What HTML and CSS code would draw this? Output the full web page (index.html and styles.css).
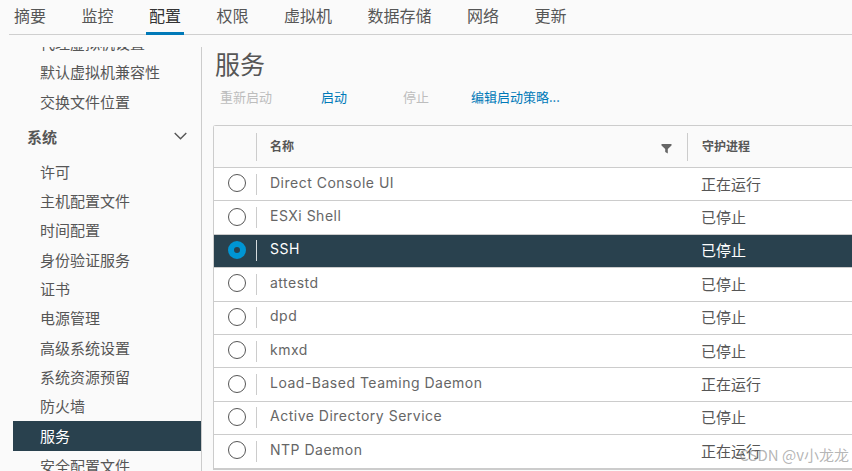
FILE: index.html
```html
<!DOCTYPE html>
<html lang="zh">
<head>
<meta charset="utf-8">
<title>服务</title>
<link rel="stylesheet" href="styles.css">
</head>
<body>
<nav class="tabs">
  <a class="tab">摘要</a>
  <a class="tab">监控</a>
  <a class="tab active">配置</a>
  <a class="tab">权限</a>
  <a class="tab">虚拟机</a>
  <a class="tab">数据存储</a>
  <a class="tab">网络</a>
  <a class="tab">更新</a>
</nav>
<div class="main">
  <aside class="side">
    <ul class="menu">
      <li class="item">代理虚拟机设置</li>
      <li class="item">默认虚拟机兼容性</li>
      <li class="item">交换文件位置</li>
      <li class="group">系统
        <svg class="chev" width="13" height="8" viewBox="0 0 13 8"><path d="M.7 1 6.5 6.8 12.3 1" fill="none" stroke="#565656" stroke-width="1.4"/></svg>
      </li>
      <li class="item">许可</li>
      <li class="item">主机配置文件</li>
      <li class="item">时间配置</li>
      <li class="item">身份验证服务</li>
      <li class="item">证书</li>
      <li class="item">电源管理</li>
      <li class="item">高级系统设置</li>
      <li class="item">系统资源预留</li>
      <li class="item">防火墙</li>
      <li class="item selected">服务</li>
      <li class="item">安全配置文件</li>
    </ul>
  </aside>
  <section class="content">
    <h1 class="title">服务</h1>
    <div class="actions">
      <span class="act a1 off">重新启动</span>
      <span class="act a2">启动</span>
      <span class="act a3 off">停止</span>
      <span class="act">编辑启动策略...</span>
    </div>
    <div class="grid">
      <div class="row head">
        <div class="c-radio"></div>
        <div class="c-name"><b>名称</b>
          <svg class="filter" width="11" height="11" viewBox="0 0 11 11"><path d="M0.5 1H10.5V2.6L6.8 6V10.5L4.2 9V6L0.5 2.6Z" fill="#666"/></svg>
        </div>
        <div class="c-state"><b>守护进程</b></div>
      </div>
      <div class="row"><div class="c-radio"><i class="radio"></i></div><div class="c-name">Direct Console UI</div><div class="c-state">正在运行</div></div>
      <div class="row"><div class="c-radio"><i class="radio"></i></div><div class="c-name">ESXi Shell</div><div class="c-state">已停止</div></div>
      <div class="row on"><div class="c-radio"><i class="radio"></i></div><div class="c-name">SSH</div><div class="c-state">已停止</div></div>
      <div class="row"><div class="c-radio"><i class="radio"></i></div><div class="c-name">attestd</div><div class="c-state">已停止</div></div>
      <div class="row"><div class="c-radio"><i class="radio"></i></div><div class="c-name">dpd</div><div class="c-state">已停止</div></div>
      <div class="row"><div class="c-radio"><i class="radio"></i></div><div class="c-name">kmxd</div><div class="c-state">已停止</div></div>
      <div class="row"><div class="c-radio"><i class="radio"></i></div><div class="c-name">Load-Based Teaming Daemon</div><div class="c-state">正在运行</div></div>
      <div class="row"><div class="c-radio"><i class="radio"></i></div><div class="c-name">Active Directory Service</div><div class="c-state">已停止</div></div>
      <div class="row"><div class="c-radio"><i class="radio"></i></div><div class="c-name">NTP Daemon</div><div class="c-state">正在运行</div></div>
    </div>
  </section>
</div>
<div class="mark">CSDN @v小龙龙</div>
</body>
</html>
```
FILE: styles.css
```css
* { box-sizing: border-box; }
html, body { height: 100%; }
body {
  margin: 0;
  width: 852px;
  height: 471px;
  overflow: hidden;
  position: relative;
  background: #fafafa;
  color: #565656;
  font-family: "Noto Sans CJK SC", "Noto Sans", sans-serif;
  font-size: 15px;
}
.tabs {
  display: flex;
  gap: 29.5px;
  height: 35px;
  margin-left: 9px;
  padding-left: 2px;
  border-bottom: 1px solid #cfcfcf;
}
.tab {
  height: 35px;
  padding: 3px 3px 0;
  font-size: 16px;
  line-height: 24px;
  color: #565656;
}
.tab.active {
  color: #333;
  border-bottom: 3px solid #0079b8;
}
.main {
  display: flex;
  height: 436px;
  padding: 12px 0 0 13px;
}
.side {
  width: 189px;
  flex: none;
  overflow: hidden;
  border-right: 1px solid #ccc;
}
.menu {
  list-style: none;
  margin: -19px 0 0;
  padding: 0;
}
.item {
  height: 29.3px;
  padding-left: 27px;
  line-height: 29px;
  white-space: nowrap;
}
.group {
  display: flex;
  align-items: center;
  justify-content: space-between;
  height: 41px;
  padding: 0 14px;
  font-weight: 700;
}
.item.selected {
  height: 30px;
  background: #29414e;
  color: #fff;
}
.content {
  flex: 1;
  min-width: 0;
  padding-left: 11px;
}
.title {
  margin: 0 0 0 2px;
  height: 36px;
  font-size: 25px;
  font-weight: 400;
  line-height: 33px;
}
.actions {
  display: flex;
  height: 42px;
  padding: 4px 0 0 7px;
  font-size: 13px;
  line-height: 19px;
  color: #0079b8;
}
.act { flex: none; }
.a1 { width: 101px; }
.a2 { width: 82px; }
.a3 { width: 68px; }
.off { color: #bdbdbd; }
.grid {
  width: 700px;
  background: #fff;
  border: 1px solid #ccc;
  border-right: 0;
  border-radius: 3px 0 0 0;
}
.row {
  display: flex;
  align-items: center;
  height: 33.4px;
  border-bottom: 1px solid #ccc;
}
.row.head { height: 42px; font-size: 12px; background: #fafafa; }
.row.on { background: #29414e; color: #fff; }
.c-radio {
  width: 42px;
  flex: none;
  display: flex;
  justify-content: center;
  padding: 0 0 2px 3px;
}
.c-name {
  width: 431px;
  flex: none;
  height: 21px;
  line-height: 18px;
  padding-left: 13px;
  border-left: 1px solid #ccc;
  position: relative;
  white-space: nowrap;
  font-family: Inter, "Noto Sans CJK SC", sans-serif;
  font-size: 14px;
  letter-spacing: 0.5px;
  color: #666;
}
.on .c-name { color: #fff; }
.c-state {
  flex: 1;
  height: 21px;
  line-height: 20px;
  padding-left: 14px;
  white-space: nowrap;
}
.head .c-name, .head .c-state {
  height: 28px;
  line-height: 25px;
  font-family: "Noto Sans CJK SC", sans-serif;
  font-size: 12px;
  letter-spacing: 0;
  color: #565656;
}
.head .c-state { border-left: 1px solid #ccc; }
.head b { font-weight: 700; }
.filter { position: absolute; right: 15px; top: 10px; }
.radio {
  display: block;
  width: 18px;
  height: 18px;
  border: 1px solid #565656;
  border-radius: 50%;
  background: #fff;
}
.on .radio {
  border: 6.5px solid #0095d3;
  background: #29414e;
}
.on .c-name { border-left-color: #d5dbde; }
.mark {
  position: absolute;
  right: 3px;
  bottom: 6px;
  font-size: 15px;
  line-height: 20px;
  color: rgba(140, 140, 140, 0.65);
}
```
